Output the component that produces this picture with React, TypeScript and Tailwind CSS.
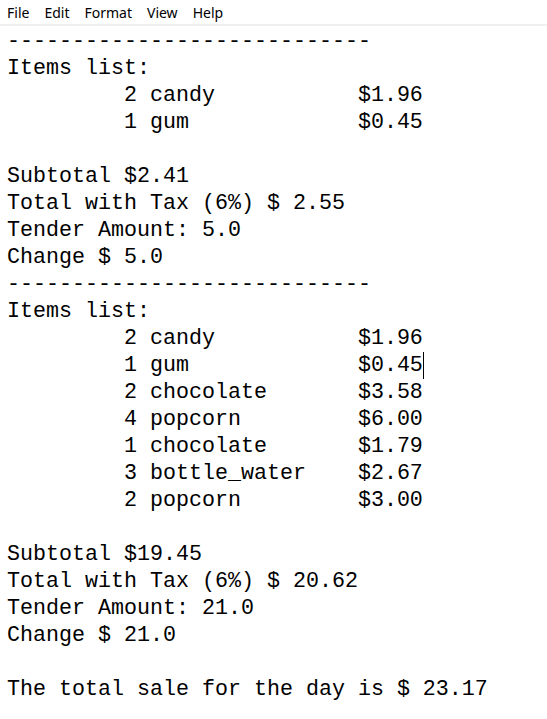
const menuItems = ["File", "Edit", "Format", "View", "Help"];

const item = (qty: number, name: string, price: string) =>
  `         ${qty} ${name}`.padEnd(27, " ") + price;

const lines: string[] = [
  "----------------------------",
  "Items list:",
  item(2, "candy", "$1.96"),
  item(1, "gum", "$0.45"),
  "",
  "Subtotal $2.41",
  "Total with Tax (6%) $ 2.55",
  "Tender Amount: 5.0",
  "Change $ 5.0",
  "----------------------------",
  "Items list:",
  item(2, "candy", "$1.96"),
  item(1, "gum", "$0.45"),
  item(2, "chocolate", "$3.58"),
  item(4, "popcorn", "$6.00"),
  item(1, "chocolate", "$1.79"),
  item(3, "bottle_water", "$2.67"),
  item(2, "popcorn", "$3.00"),
  "",
  "Subtotal $19.45",
  "Total with Tax (6%) $ 20.62",
  "Tender Amount: 21.0",
  "Change $ 21.0",
  "",
  "The total sale for the day is $ 23.17",
];

// line that holds the text caret
const caretLine = 12;

export default function App() {
  return (
    <div className="w-[547px] h-[719px] bg-white overflow-hidden">
      <div className="h-[26px] border-b-2 border-[#f0f0f0] text-[14px] text-black font-['Segoe_UI','Noto_Sans',sans-serif]">
        <div className="flex pt-[2px]">
          {menuItems.map((m) => (
            <span key={m} className="px-[7.5px] first:pl-[7px] leading-[22px]">
              {m}
            </span>
          ))}
        </div>
      </div>
      <div className="pt-[2px] pl-[7px] font-['Liberation_Mono',monospace] text-[21.67px] leading-[27px] text-black whitespace-pre">
        {lines.map((l, i) => (
          <div key={i} className="h-[27px] flex">
            <span>{l}</span>
            {i === caretLine && <span className="w-px h-[27px] bg-black" />}
          </div>
        ))}
      </div>
    </div>
  );
}
